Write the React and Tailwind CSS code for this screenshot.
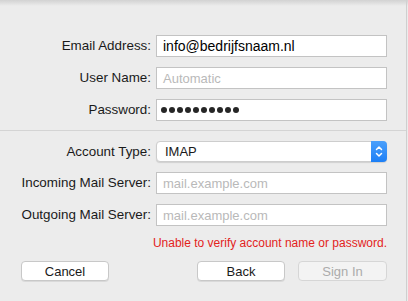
import React from "react";

function Label({ children }) {
  return (
    <div className="w-[156px] pr-[5px] text-right text-[13.4px] text-[#1a1a1a] leading-none">
      {children}
    </div>
  );
}

function Field({ children, placeholder }) {
  return (
    <div className="w-[231px] h-[22px] bg-white border border-[#c3c3c3] flex items-center pl-[6px] leading-none">
      {placeholder ? (
        <span className="text-[13px] text-[#b9b9b9]">{placeholder}</span>
      ) : (
        children
      )}
    </div>
  );
}

function Row({ label, children, className = "" }) {
  return (
    <div className={"flex items-center " + className}>
      <Label>{label}</Label>
      {children}
    </div>
  );
}

export default function App() {
  return (
    <div className="w-[408px] h-[301px] bg-[#ececec] relative overflow-hidden font-['Liberation_Sans',Arial,sans-serif]">
      <div className="absolute inset-x-0 top-0 h-[6px] bg-gradient-to-b from-[#d2d2d2] to-[#ececec]/0" />
      <div className="w-[407px] h-full border-r border-[#cfcfcf] pt-[35px]">
        <div className="flex flex-col gap-[10px]">
          <Row label="Email Address:">
            <Field>
              <span className="text-[14px] text-black">info@bedrijfsnaam.nl</span>
            </Field>
          </Row>
          <Row label="User Name:">
            <Field placeholder="Automatic" />
          </Row>
          <Row label="Password:">
            <Field>
              <div className="flex gap-[2px] -ml-[2px]">
                {Array.from({ length: 10 }).map((_, i) => (
                  <span key={i} className="w-[6px] h-[6px] rounded-full bg-[#262626]" />
                ))}
              </div>
            </Field>
          </Row>
        </div>
        <div className="mt-[9px] h-px bg-[#d4d4d4]" />
        <div className="mt-[10px] flex flex-col gap-[10px]">
          <Row label="Account Type:">
            <div className="w-[231px] h-[21px] bg-white rounded-[4px] border border-[#cdcdcd] shadow-[0_1px_1px_rgba(0,0,0,0.12)] flex items-stretch">
              <div className="flex-1 flex items-center pl-[8px] text-[13px] text-[#1a1a1a] leading-none">IMAP</div>
              <div className="w-[16px] -my-px -mr-px rounded-r-[4px] bg-gradient-to-b from-[#4aa0fb] to-[#1b7ff6] flex items-center justify-center">
                <svg width="8" height="13" viewBox="0 0 8 13" fill="none" stroke="white" strokeWidth="1.5" strokeLinecap="round" strokeLinejoin="round">
                  <path d="M1.5 4.5 L4 2 L6.5 4.5" />
                  <path d="M1.5 8.5 L4 11 L6.5 8.5" />
                </svg>
              </div>
            </div>
          </Row>
          <Row label="Incoming Mail Server:">
            <Field placeholder="mail.example.com" />
          </Row>
          <Row label="Outgoing Mail Server:">
            <Field placeholder="mail.example.com" />
          </Row>
        </div>
        <div className="mt-[10px] h-[14px] flex justify-end pr-[19px]">
          <span className="text-[12px] leading-[14px] text-[#e3231c]">Unable to verify account name or password.</span>
        </div>
        <div className="mt-[11px] flex items-center pl-[21px] pr-[19px]">
          <button className="w-[88px] h-[20px] bg-white rounded-[4px] border border-[#c8c8c8] shadow-[0_1px_0_rgba(0,0,0,0.08)] text-[13px] text-[#1a1a1a] leading-none">
            Cancel
          </button>
          <div className="flex-1" />
          <button className="w-[88px] h-[20px] bg-white rounded-[4px] border border-[#c8c8c8] shadow-[0_1px_0_rgba(0,0,0,0.08)] text-[13px] text-[#1a1a1a] leading-none">
            Back
          </button>
          <button className="ml-[13px] w-[89px] h-[20px] bg-[#f3f3f3] rounded-[4px] border border-[#d6d6d6] text-[13px] text-[#ababab] leading-none">
            Sign In
          </button>
        </div>
      </div>
    </div>
  );
}
